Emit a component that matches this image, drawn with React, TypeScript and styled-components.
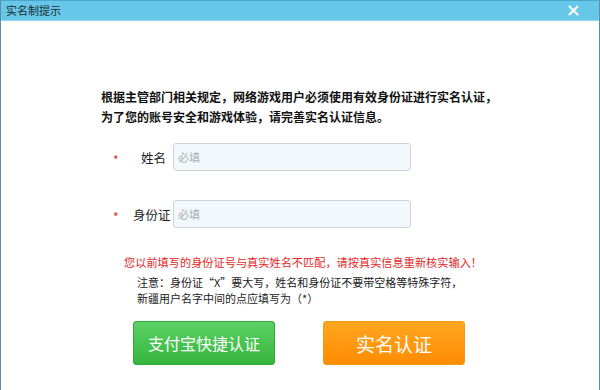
import styled, { createGlobalStyle } from "styled-components";

const GlobalStyle = createGlobalStyle`
  html, body {
    margin: 0;
    padding: 0;
    background: #ffffff;
  }
  * {
    box-sizing: border-box;
  }
`;

const fields = [
  { label: "姓名", placeholder: "必填" },
  { label: "身份证", placeholder: "必填" },
];

function App() {
  return (
    <>
      <GlobalStyle />
      <Window lang="zh-CN">
        <TitleBar>
          <Title>实名制提示</Title>
          <Close aria-label="关闭">
            <svg width="11" height="11" viewBox="0 0 11 11">
              <path
                d="M1.5 1.5 L9.5 9.5 M9.5 1.5 L1.5 9.5"
                stroke="#ffffff"
                strokeWidth="2"
                strokeLinecap="round"
              />
            </svg>
          </Close>
        </TitleBar>
        <Body>
          <Intro>
            根据主管部门相关规定，网络游戏用户必须使用有效身份证进行实名认证，
            <br />
            为了您的账号安全和游戏体验，请完善实名认证信息。
          </Intro>
          <Form>
            {fields.map((f) => (
              <Row key={f.label}>
                <Star>*</Star>
                <Label>{f.label}</Label>
                <Input placeholder={f.placeholder} />
              </Row>
            ))}
          </Form>
          <Error>您以前填写的身份证号与真实姓名不匹配，请按真实信息重新核实输入！</Error>
          <Note>
            注意：身份证<Punct $side="right">“</Punct>X<Punct $side="left">”</Punct>
            要大写，姓名和身份证不要带空格等特殊字符，
            <br />
            新疆用户名字中间的点应填写为<Punct $side="right">（</Punct>*
            <Punct $side="left">）</Punct>
          </Note>
          <Buttons>
            <Button $variant="green" $size={16}>
              支付宝快捷认证
            </Button>
            <Button $variant="orange" $size={19}>
              实名认证
            </Button>
          </Buttons>
        </Body>
      </Window>
    </>
  );
}

const Window = styled.div`
  width: 600px;
  height: 390px;
  border-left: 1px solid #5b8fa3;
  border-right: 1px solid #5b8fa3;
  border-top: 1px solid #4ba6cc;
  background: #ffffff;
  display: flex;
  flex-direction: column;
  font-family: "Noto Sans CJK SC", "Noto Sans", sans-serif;
  overflow: hidden;
`;

const TitleBar = styled.div`
  height: 20px;
  flex: none;
  background: #66c7e8;
  border-bottom: 1px solid #8fd6ef;
  display: flex;
  align-items: center;
  justify-content: space-between;
  padding: 0 20px 0 5px;
`;

const Title = styled.span`
  font-size: 11px;
  color: #1a2a33;
  line-height: 1;
`;

const Close = styled.span`
  display: flex;
  align-items: center;
`;

const Body = styled.div`
  flex: 1;
  padding: 66px 0 0 100px;
  display: flex;
  flex-direction: column;
`;

const Intro = styled.p`
  margin: 0;
  font-size: 12px;
  font-weight: 700;
  line-height: 20px;
  color: #111111;
  white-space: nowrap;
`;

const Form = styled.div`
  margin-top: 16px;
  display: flex;
  flex-direction: column;
  gap: 29px;
`;

const Row = styled.div`
  display: flex;
  align-items: center;
  height: 28px;
`;

const Star = styled.span`
  width: 20px;
  margin-left: 12px;
  color: #e0302a;
  font-size: 12px;
  padding-top: 4px;
`;

const Label = styled.span`
  width: 33px;
  text-align: right;
  font-size: 12.5px;
  color: #222222;
  margin-right: 8px;
  white-space: nowrap;
`;

const Input = styled.input`
  width: 238px;
  height: 28px;
  margin-left: -1px;
  border: 1px solid #cdd3d8;
  border-radius: 3px;
  background: #f3f8fc;
  padding: 0 4px;
  font-family: "Noto Sans CJK SC", sans-serif;
  font-size: 11px;
  outline: none;
  &::placeholder {
    color: #a8adb2;
  }
`;

const Error = styled.div`
  margin: 26px 0 0 23px;
  font-size: 11.2px;
  line-height: 16px;
  color: #e4281f;
  white-space: nowrap;
`;

const Note = styled.div`
  margin: 4px 0 0 36px;
  font-size: 11px;
  line-height: 16px;
  color: #222222;
  white-space: nowrap;
`;

const Punct = styled.span<{ $side: "left" | "right" }>`
  display: inline-block;
  width: 1em;
  text-align: ${(p) => p.$side};
`;

const Buttons = styled.div`
  margin: 15px 0 0 32px;
  display: flex;
  gap: 48px;
`;

type ButtonProps = {
  $variant: "green" | "orange";
  $size: number;
};

const Button = styled.button<ButtonProps>`
  width: 142px;
  height: 44px;
  border-radius: 3px;
  font-family: "Noto Sans CJK SC", sans-serif;
  font-size: ${(p) => p.$size}px;
  color: #ffffff;
  cursor: pointer;
  display: flex;
  align-items: center;
  justify-content: center;
  border: 1px solid
    ${(p) => (p.$variant === "green" ? "#33a83a" : "#f39a10")};
  background: ${(p) =>
    p.$variant === "green"
      ? "linear-gradient(#5bd163, #36b53f)"
      : "linear-gradient(#ffa620, #ff8c02)"};
`;

export default App;
